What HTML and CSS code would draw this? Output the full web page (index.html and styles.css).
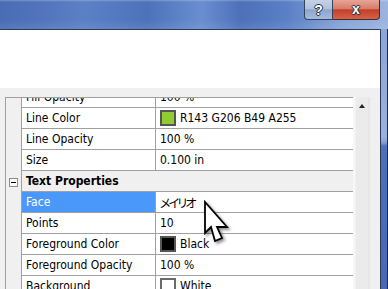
FILE: index.html
```html
<!DOCTYPE html>
<html>
<head>
<meta charset="utf-8">
<link rel="stylesheet" href="styles.css">
</head>
<body>
<div class="window">
  <div class="titlebar">
    <div class="cap-btn help">?</div>
    <div class="cap-btn close">x</div>
  </div>
  <div class="main">
    <div class="client">
      <div class="blank"></div>
      <div class="panel">
        <div class="grid">
          <div class="row first">
            <div class="gut"></div>
            <div class="name">Fill Opacity</div>
            <div class="val">100 %</div>
          </div>
          <div class="row">
            <div class="gut"></div>
            <div class="name">Line Color</div>
            <div class="val"><span class="swatch green"></span>R143 G206 B49 A255</div>
          </div>
          <div class="row">
            <div class="gut"></div>
            <div class="name">Line Opacity</div>
            <div class="val">100 %</div>
          </div>
          <div class="row">
            <div class="gut"></div>
            <div class="name">Size</div>
            <div class="val">0.100 in</div>
          </div>
          <div class="row">
            <div class="gut toggle-cell"><span class="toggle"></span></div>
            <div class="group">Text Properties</div>
          </div>
          <div class="row">
            <div class="gut"></div>
            <div class="name sel">Face</div>
            <div class="val"><span class="jp">メイリオ</span></div>
          </div>
          <div class="row">
            <div class="gut"></div>
            <div class="name">Points</div>
            <div class="val">10</div>
          </div>
          <div class="row">
            <div class="gut"></div>
            <div class="name">Foreground Color</div>
            <div class="val"><span class="swatch black"></span>Black</div>
          </div>
          <div class="row">
            <div class="gut"></div>
            <div class="name">Foreground Opacity</div>
            <div class="val">100 %</div>
          </div>
          <div class="row">
            <div class="gut"></div>
            <div class="name">Background</div>
            <div class="val"><span class="swatch white"></span>White</div>
          </div>
        </div>
        <div class="scroll"><span class="arrow-up"></span></div>
      </div>
    </div>
    <div class="frame-right"></div>
  </div>
</div>
<svg class="cursor" width="32" height="48" viewBox="0 0 32 48">
  <polygon points="2,2 2,33 8,27 12,41 19,38 14,27 24,27" fill="#fff" stroke="#000" stroke-width="1.8" stroke-linejoin="miter"/>
</svg>
</body>
</html>
```
FILE: styles.css
```css
* { box-sizing: border-box; margin: 0; padding: 0; }
html, body { width: 388px; height: 289px; overflow: hidden; }
body {
  font-family: "DejaVu Sans", sans-serif;
  font-stretch: condensed;
  font-size: 12px;
  color: #000;
  background: #4e70b8;
  position: relative;
}
.window { display: flex; flex-direction: column; height: 289px; }
.titlebar {
  height: 29px;
  flex: none;
  display: flex;
  justify-content: flex-end;
  align-items: flex-start;
  padding-right: 8px;
  background:
    linear-gradient(180deg, rgba(255,255,255,0.25) 0, rgba(255,255,255,0) 2px, rgba(255,255,255,0) 20px, rgba(255,255,255,0.08) 100%),
    linear-gradient(90deg, #4a6cb4 0%, #5475bd 12%, #5c80c6 22%, #4e72ba 38%, #6a8ed0 52%, #4d70b9 62%, #5b80c6 74%, #86a4d8 88%, #9bb4e0 100%);
}
.cap-btn {
  height: 20px;
  display: flex;
  align-items: center;
  justify-content: center;
  font-family: "Liberation Sans", sans-serif;
  font-weight: bold;
  color: #fff;
  border: 1px solid #35435c;
  border-top: none;
  text-shadow: 0 0 1px #1b2438, 1px 0 0 #2a344a, -1px 0 0 #2a344a, 0 1px 0 #2a344a, 0 -1px 0 #2a344a;
}
.help {
  width: 29px;
  font-size: 14px;
  border-radius: 0 0 0 4px;
  background: linear-gradient(180deg, #c5d1e5 0, #b2c2dc 45%, #8ea6cc 52%, #a6bbdc 100%);
}
.close {
  width: 47px;
  font-size: 14px;
  padding-bottom: 2px;
  border-left: none;
  border-color: #4b2a2a;
  border-radius: 0 0 4px 0;
  background: linear-gradient(180deg, #e6a597 0, #d77d6b 45%, #c53f29 52%, #d2634b 100%);
}
.main { flex: 1; display: flex; min-height: 0; }
.client {
  width: 381px;
  flex: none;
  background: #fff;
  border-top: 1px solid #2c3b58;
  border-right: 1px solid #2c3b58;
  border-top-right-radius: 2px;
  display: flex;
  flex-direction: column;
  min-height: 0;
}
.blank { height: 58px; flex: none; background: #fff; }
.panel {
  flex: 1;
  min-height: 0;
  overflow: hidden;
  background: #f0f0f0;
  padding: 9px 10px 0 5px;
  display: flex;
  align-items: stretch;
}
.grid {
  width: 348px;
  flex: none;
  border-left: 1px solid #a0a0a0;
  border-top: 1px solid #a0a0a0;
  overflow: hidden;
  display: flex;
  flex-direction: column;
  background: #fff;
}
.row { display: flex; height: 21px; flex: none; }
.row.first { margin-top: -11px; }
.gut { width: 16px; flex: none; background: #f0f0f0; border-right: 1px solid #a0a0a0; }
.toggle-cell { padding: 7px 0 0 3px; }
.toggle {
  display: block;
  width: 9px;
  height: 9px;
  border: 1px solid #8e8e8e;
  background: #fafafa;
  position: relative;
}
.toggle::after {
  content: "";
  position: absolute;
  left: 1px;
  top: 3px;
  width: 5px;
  height: 1px;
  background: #000;
}
.name {
  width: 134px;
  flex: none;
  border-right: 1px solid #a0a0a0;
  border-bottom: 1px solid #a0a0a0;
  padding-left: 4px;
  line-height: 20px;
  white-space: nowrap;
}
.name.sel { background: #4a98fa; color: #fff; }
.val {
  flex: 1;
  border-bottom: 1px solid #a0a0a0;
  padding-left: 4px;
  display: flex;
  align-items: center;
  gap: 4px;
  white-space: nowrap;
}
.group {
  flex: 1;
  background: #f0f0f0;
  border-bottom: 1px solid #a0a0a0;
  padding-left: 4px;
  line-height: 20px;
  font-weight: bold;
}
.swatch {
  width: 16px;
  height: 16px;
  flex: none;
  border: 2px solid #555;
}
.swatch.green { background: #8fce31; }
.swatch.black { background: #000; }
.swatch.white { background: #fff; border-color: #6a6a6a; }
.jp {
  font-family: "Noto Sans CJK JP", sans-serif;
  font-feature-settings: "palt";
  font-size: 12px;
  letter-spacing: -1.8px;
}
.scroll {
  width: 17px;
  flex: none;
  position: relative;
  background: linear-gradient(90deg, #f7f7f7 0, #f7f7f7 2px, #ebebeb 3px, #ebebeb 15px, #e2e2e2 16px, #e8e8e8 17px);
}
.arrow-up {
  position: absolute;
  left: 6px;
  top: 7px;
  width: 0;
  height: 0;
  border-left: 3.5px solid transparent;
  border-right: 3.5px solid transparent;
  border-bottom: 4px solid #222;
}
.frame-right {
  flex: 1;
  border-right: 1px solid #1c2a46;
  background: linear-gradient(180deg, #8aa5d8 0, #9ab2df 108px, #7f9bd2 114px, #4d70b9 117px, #4868b4 100%);
}
.cursor {
  position: absolute;
  left: 203px;
  top: 200px;
  filter: drop-shadow(2px 2px 1.5px rgba(0,0,0,0.45));
}
```
